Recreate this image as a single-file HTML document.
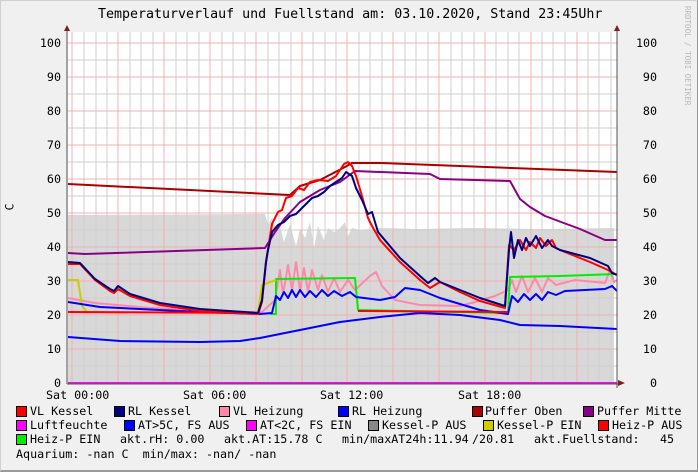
<!DOCTYPE html>
<html><head><meta charset="utf-8"><style>
*{margin:0;padding:0}
body{width:698px;height:471px;overflow:hidden;background:#f0f0f0;position:relative;font-family:"DejaVu Sans Mono","Liberation Mono",monospace;color:#000}
.t{position:absolute;white-space:pre;font-size:11.7px;line-height:14px}
.b{position:absolute;width:9px;height:9px;border:1px solid #000}
</style></head><body>
<div style="position:absolute;left:0;top:0;width:696px;height:469px;border-top:1px solid #d0d0d0;border-left:1px solid #d0d0d0;border-right:2px solid #9a9a9a;border-bottom:2px solid #9a9a9a"></div>
<div class="t" style="left:98px;top:8px;font-size:13.3px">Temperaturverlauf und Fuellstand am: 03.10.2020, Stand 23:45Uhr</div>
<div class="t" style="left:682px;top:6px;font-size:7.5px;color:#b8b8b8;writing-mode:vertical-rl;line-height:10px">RRDTOOL / TOBI OETIKER</div>
<div class="t" style="left:6px;top:200px;transform:rotate(-90deg)">C</div>
<svg width="698" height="471" style="position:absolute;left:0;top:0">
<rect x="68" y="32" width="549" height="351" fill="#fff"/>
<path d="M68,215 L265,214 L268,225 L272,218 L276,230 L280,226 L284,242 L290,224 L296,246 L300,228 L305,238 L310,222 L314,248 L318,226 L324,240 L328,228 L334,232 L340,228 L345,222 L348,236 L352,228 L360,230 L380,228 L420,229 L470,228 L540,229 L614,228 L614,383 L68,383Z" fill="#d8d8d8"/>
<g stroke="#cfcfcf" stroke-width="1">
<path d="M84,32V383M96,32V383M107,32V383M130,32V383M141,32V383M153,32V383M176,32V383M187,32V383M199,32V383M222,32V383M233,32V383M245,32V383M268,32V383M279,32V383M291,32V383M313,32V383M325,32V383M336,32V383M359,32V383M370,32V383M382,32V383M405,32V383M416,32V383M428,32V383M451,32V383M462,32V383M474,32V383M496,32V383M508,32V383M519,32V383M542,32V383M553,32V383M565,32V383M588,32V383M599,32V383M611,32V383"/>
<path d="M68,366H617M68,332H617M68,298H617M68,264H617M68,230H617M68,196H617M68,162H617M68,128H617M68,94H617M68,60H617"/>
</g>
<g stroke="#f0b0b0" stroke-width="1">
<path d="M72,32V383M118,32V383M164,32V383M210,32V383M256,32V383M302,32V383M347,32V383M393,32V383M439,32V383M485,32V383M531,32V383M577,32V383"/>
<path d="M68,349H617M68,315H617M68,281H617M68,247H617M68,213H617M68,179H617M68,145H617M68,111H617M68,77H617M68,43H617"/>
</g>
<g fill="none" stroke-width="2" stroke-linejoin="round">
<polyline stroke="#0000ff" points="68,337 120,341 200,342 240,341 260,338 300,330 340,322 380,317 420,313 460,315 500,320 520,325 560,326 617,329"/>
<polyline stroke="#ff88aa" points="68,298 95,303 150,308 250,312 262,312 275,300 280,270 283,295 288,265 292,290 296,262 300,290 304,268 308,292 312,270 318,290 322,275 328,292 334,278 340,292 348,280 355,290 370,276 376,272 382,286 395,300 420,305 460,306 475,302 495,296 508,290 512,280 516,292 522,276 528,292 535,278 542,292 548,278 556,285 575,280 605,283 610,270 614,282 617,280"/>
<polyline stroke="#00ee00" points="270,314 276,314 276,279 355,278 358,310 508,313 510,277 560,276 617,274"/>
<polyline stroke="#cccc00" points="68,280 78,280 82,306 88,313"/>
<polyline stroke="#cccc00" points="258,312 262,285 276,280"/>
<polyline stroke="#0000ff" points="68,302 100,307 200,312 260,314 272,313 276,296 280,300 284,292 288,298 292,290 296,297 300,290 305,297 310,291 316,297 322,290 328,296 334,291 342,296 350,292 356,297 380,300 395,297 405,288 420,290 440,298 480,310 508,314 512,296 518,302 524,294 530,300 536,294 542,300 548,292 556,295 565,291 605,289 612,286 617,291"/>
<polyline stroke="#ff0000" points="68,312 260,313"/>
<polyline stroke="#ff0000" points="358,311 508,312"/>
<polyline stroke="#aa0000" points="68,184 290,195 300,186 320,180 345,167 352,163 380,163 617,172"/>
<polyline stroke="#880088" points="68,253 85,254 265,248 275,232 285,218 300,202 320,190 340,182 355,171 430,174 440,179 510,181 520,199 530,207 545,216 580,229 605,240 617,240"/>
<polyline stroke="#ff0000" points="68,264 80,264 95,280 110,291 114,293 118,289 130,296 160,305 200,311 258,314 262,302 266,262 272,224 278,212 282,210 286,198 292,196 298,188 304,190 310,182 318,180 328,181 336,176 340,170 344,164 348,162 352,166 356,176 362,196 368,218 372,226 380,240 400,262 420,280 430,288 440,282 460,292 480,301 505,308 509,245 514,250 520,240 526,250 530,242 536,248 540,238 546,246 552,240 556,248 560,250 590,262 608,270 617,275"/>
<polyline stroke="#000080" points="68,262 80,263 95,279 110,289 114,291 118,286 130,294 160,303 200,309 258,313 262,300 266,262 268,250 272,232 278,225 284,222 290,216 296,214 302,208 306,204 312,198 318,196 324,192 330,186 336,182 342,178 346,172 352,176 356,188 362,200 368,214 372,212 378,232 400,258 420,276 428,283 435,278 440,282 460,290 480,298 505,306 509,250 511,232 514,258 518,240 522,250 526,238 530,246 536,236 542,248 548,240 552,246 556,248 560,250 590,258 608,266 612,273 617,275"/>
</g>
<line x1="68" y1="383" x2="617" y2="383" stroke="#ff00ff" stroke-width="2"/>
<line x1="67" y1="30" x2="67" y2="384" stroke="#555" stroke-width="1"/>
<line x1="617" y1="30" x2="617" y2="388" stroke="#555" stroke-width="1"/>
<line x1="67" y1="384" x2="620" y2="384" stroke="#555" stroke-width="1"/>
<path d="M64,31 L67,25 L70,31Z M618,380 L625,383 L618,386Z M614,31 L617,25 L620,31Z" fill="#8b1a1a"/>
</svg>
<div class="t" style="left:33px;top:36px;width:28px;text-align:right">100</div>
<div class="t" style="left:33px;top:70px;width:28px;text-align:right">90</div>
<div class="t" style="left:33px;top:104px;width:28px;text-align:right">80</div>
<div class="t" style="left:33px;top:138px;width:28px;text-align:right">70</div>
<div class="t" style="left:33px;top:172px;width:28px;text-align:right">60</div>
<div class="t" style="left:33px;top:206px;width:28px;text-align:right">50</div>
<div class="t" style="left:33px;top:240px;width:28px;text-align:right">40</div>
<div class="t" style="left:33px;top:274px;width:28px;text-align:right">30</div>
<div class="t" style="left:33px;top:308px;width:28px;text-align:right">20</div>
<div class="t" style="left:33px;top:342px;width:28px;text-align:right">10</div>
<div class="t" style="left:33px;top:376px;width:28px;text-align:right">0</div>
<div class="t" style="left:636px;top:36px;width:21px;text-align:right">100</div>
<div class="t" style="left:636px;top:70px;width:21px;text-align:right">90</div>
<div class="t" style="left:636px;top:104px;width:21px;text-align:right">80</div>
<div class="t" style="left:636px;top:138px;width:21px;text-align:right">70</div>
<div class="t" style="left:636px;top:172px;width:21px;text-align:right">60</div>
<div class="t" style="left:636px;top:206px;width:21px;text-align:right">50</div>
<div class="t" style="left:636px;top:240px;width:21px;text-align:right">40</div>
<div class="t" style="left:636px;top:274px;width:21px;text-align:right">30</div>
<div class="t" style="left:636px;top:308px;width:21px;text-align:right">20</div>
<div class="t" style="left:636px;top:342px;width:21px;text-align:right">10</div>
<div class="t" style="left:636px;top:376px;width:21px;text-align:right">0</div>
<div class="t" style="left:46px;top:388px">Sat 00:00</div>
<div class="t" style="left:183px;top:388px">Sat 06:00</div>
<div class="t" style="left:320px;top:388px">Sat 12:00</div>
<div class="t" style="left:458px;top:388px">Sat 18:00</div>
<div class="b" style="left:16px;top:406px;background:#ff0000"></div><div class="t" style="left:30px;top:404px">VL Kessel</div>
<div class="b" style="left:114px;top:406px;background:#000080"></div><div class="t" style="left:128px;top:404px">RL Kessel</div>
<div class="b" style="left:219px;top:406px;background:#ff88aa"></div><div class="t" style="left:233px;top:404px">VL Heizung</div>
<div class="b" style="left:338px;top:406px;background:#0000ff"></div><div class="t" style="left:352px;top:404px">RL Heizung</div>
<div class="b" style="left:472px;top:406px;background:#aa0000"></div><div class="t" style="left:485px;top:404px">Puffer Oben</div>
<div class="b" style="left:583px;top:406px;background:#880088"></div><div class="t" style="left:597px;top:404px">Puffer Mitte</div>
<div class="b" style="left:16px;top:420px;background:#ff00ff"></div><div class="t" style="left:30px;top:418px">Luftfeuchte</div>
<div class="b" style="left:124px;top:420px;background:#0000ff"></div><div class="t" style="left:138px;top:418px">AT&gt;5C, FS AUS</div>
<div class="b" style="left:246px;top:420px;background:#ff00ff"></div><div class="t" style="left:260px;top:418px">AT&lt;2C, FS EIN</div>
<div class="b" style="left:368px;top:420px;background:#888888"></div><div class="t" style="left:382px;top:418px">Kessel-P AUS</div>
<div class="b" style="left:483px;top:420px;background:#cccc00"></div><div class="t" style="left:497px;top:418px">Kessel-P EIN</div>
<div class="b" style="left:598px;top:420px;background:#ff0000"></div><div class="t" style="left:612px;top:418px">Heiz-P AUS</div>
<div class="b" style="left:16px;top:434px;background:#00ee00"></div><div class="t" style="left:30px;top:432px">Heiz-P EIN</div>
<div class="t" style="left:120px;top:432px">akt.rH: 0.00</div>
<div class="t" style="left:224px;top:432px">akt.AT:15.78 C</div>
<div class="t" style="left:342px;top:432px">min/maxAT24h:11.94</div>
<div class="t" style="left:472px;top:432px">/20.81</div>
<div class="t" style="left:534px;top:432px">akt.Fuellstand:</div>
<div class="t" style="left:660px;top:432px">45</div>
<div class="t" style="left:16px;top:447px">Aquarium: -nan C  min/max: -nan/ -nan</div>
</body></html>
